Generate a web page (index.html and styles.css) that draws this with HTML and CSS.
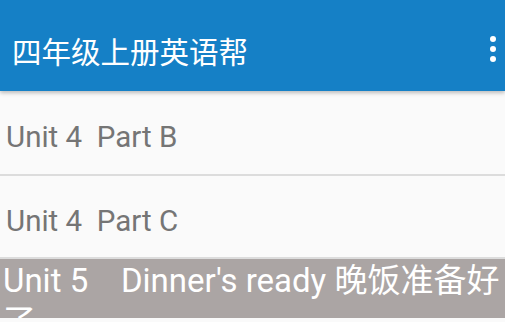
FILE: index.html
```html
<!DOCTYPE html>
<html>
<head>
<meta charset="utf-8">
<link rel="stylesheet" href="styles.css">
</head>
<body>
<div class="app">
  <header class="toolbar">
    <div class="title">四年级上册英语帮</div>
    <div class="menu" aria-label="more">
      <span class="dot"></span><span class="dot"></span><span class="dot"></span>
    </div>
  </header>
  <ul class="list">
    <li class="item">Unit 4  Part B</li>
    <li class="item">Unit 4  Part C</li>
    <li class="item active">Unit 5    Dinner's ready 晚饭准备好了</li>
  </ul>
</div>
</body>
</html>
```

FILE: styles.css
```css
html, body {
  margin: 0;
  padding: 0;
  background: #fafafa;
  width: 505px;
  height: 322px;
  overflow: hidden;
}

.app {
  font-family: Roboto, "Noto Sans CJK SC", sans-serif;
  display: flex;
  flex-direction: column;
}

.toolbar {
  height: 91px;
  background: #1580c6;
  display: flex;
  align-items: center;
  justify-content: space-between;
  padding: 0 9px 0 12px;
  box-shadow: 0 2px 4px rgba(0, 0, 0, 0.25);
  position: relative;
  z-index: 1;
}

.title {
  color: #ffffff;
  font-size: 29.5px;
  padding-top: 8px;
}

.menu {
  display: flex;
  flex-direction: column;
  gap: 4px;
  padding-top: 6px;
}

.dot {
  width: 6px;
  height: 6px;
  border-radius: 50%;
  background: #ffffff;
}

.list {
  list-style: none;
  margin: 0;
  padding: 0;
}

.item {
  height: 83px;
  box-sizing: border-box;
  border-bottom: 2px solid #dcdcdc;
  display: flex;
  align-items: center;
  padding: 8px 0 0 6px;
  font-size: 29.5px;
  color: #757575;
  white-space: pre;
}

.item:first-child {
  height: 85px;
}

.item.active {
  height: 59px;
  display: block;
  border-bottom: none;
  background: #aba5a4;
  color: #ffffff;
  white-space: pre-wrap;
  padding: 1px 0 0 3px;
  font-size: 33px;
  line-height: 41px;
  overflow: hidden;
}
```
